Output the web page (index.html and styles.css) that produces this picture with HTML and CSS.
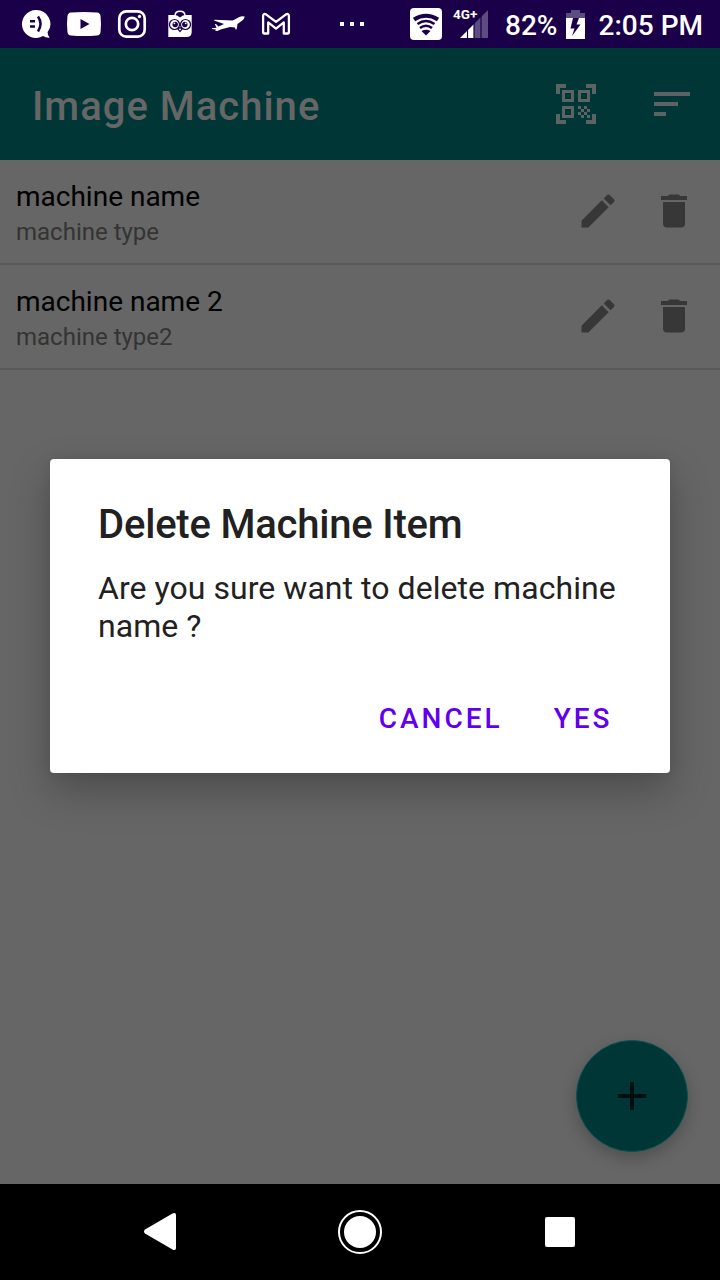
FILE: index.html
```html
<!DOCTYPE html>
<html lang="en">
<head>
<meta charset="utf-8">
<title>Image Machine</title>
<link rel="stylesheet" href="styles.css">
</head>
<body>
<div class="screen">
  <header class="status">
    <div class="notifications">
      <svg class="note" viewBox="0 0 36 36"><path fill="#fff" d="M18 4a14 14 0 1 0 7 26.100q3 2 6.600 1.700q-2-2.500-2-5.500A14 14 0 0 0 18 4z"/><path d="M12 15.200h5M12 20.500h5" stroke="#190048" stroke-width="2.400"/><path d="M20 10.500q5 7 0 15" fill="none" stroke="#190048" stroke-width="2.500"/></svg>
      <svg class="note" viewBox="0 0 36 36"><path fill="#fff" d="M5 6.600Q18 5.400 31 6.600q3.300.3 3.600 4Q35.400 18 34.600 25.400q-.4 3.700-3.600 4.100Q18 30.700 5 29.500q-3.300-.4-3.600-4.100Q.6 18 1.400 10.600q.4-3.700 3.600-4z"/><path fill="#190048" d="M14.500 13v10l9-5z"/></svg>
      <svg class="note" viewBox="0 0 36 36"><g fill="none" stroke="#fff" stroke-width="2.700"><rect x="5.300" y="5.300" width="25.400" height="25.400" rx="7"/><circle cx="18" cy="18" r="6.200"/></g><circle cx="25.500" cy="10.500" r="1.700" fill="#fff"/></svg>
      <svg class="note" viewBox="0 0 36 36"><path d="M13 10q0-4.700 5-4.700t5 4.700" fill="none" stroke="#fff" stroke-width="1.500"/><path fill="#fff" d="M6.300 9h5q4.200 0 6.700 2.400Q20.500 9 24.700 9h5v17q0 5-5 5H6.300z"/><g fill="#fff" stroke="#190048" stroke-width="1.200"><circle cx="12.500" cy="18.500" r="5"/><circle cx="23.500" cy="18.500" r="5"/><path d="m16 23 2-1.500 2 1.500-2 2.500z"/></g><g fill="#190048"><circle cx="13.200" cy="18.500" r="2.700"/><circle cx="22.800" cy="18.500" r="2.700"/></g><circle cx="12.400" cy="17.300" r=".9" fill="#fff"/><circle cx="23.700" cy="17.300" r=".9" fill="#fff"/></svg>
      <svg class="note" viewBox="0 0 36 36"><path fill="#fff" d="M34.700 10.600Q32 9.600 29.300 11l-6.500 3.400L4.500 13.700 4 14.400l10 3.700-5.500 2.300L6 18H4.800l1.700 3.700-4.600.6v.8l4 .3-.7 1.400 2.100.3 3.300-1.700L20 20.900l5 .6.500 2 1.200-.3.800-5.200 2.700-2q4-2 4.500-5.400z"/></svg>
      <svg class="note" viewBox="0 0 36 36"><path d="M6 27.200q-.9 0-.9-1V10q0-3.300 2.900-1.900l10 7.500 10-7.500q2.900-1.400 2.900 1.900v16.200q0 1-.9 1h-4.200V16.100L18 22.300l-7.800-6.200v11.100z" fill="none" stroke="#fff" stroke-width="2.300" stroke-linejoin="round" transform="translate(0 .3)"/></svg>
    </div>
    <svg class="more" viewBox="0 0 24 4"><path fill="#fff" d="M0 0h4v4H0zm10 0h4v4h-4zm10 0h4v4h-4z"/></svg>
    <svg class="wifi" viewBox="0 0 32 32"><rect width="32" height="32" rx="4" fill="#fff"/><g fill="none" stroke="#190048"><path d="M4 11.500q12-7.500 24 0" stroke-width="4"/><path d="M7.500 16q8.500-6 17 0M10 20q6-4.500 12 0" stroke-width="2.600"/></g><path fill="#190048" d="M11.500 23q4.500-2.500 9 0L16 27.500z"/></svg>
    <div class="network">
      <span class="network-type">4G+</span>
      <svg class="signal" viewBox="0 0 28 28"><path fill="#5d4c7f" d="M14 14 28 0v28H14z"/><path fill="#fff" d="m0 28 14-14v14z"/><path d="M7.500 18v10M14 10v18M21 5v23" stroke="#190048" stroke-width="1.200"/></svg>
    </div>
    <span class="battery-level">82%</span>
    <svg class="battery" viewBox="0 0 19 29"><path fill="#5d4c7f" d="M5 0h9v3h5v5H0V3h5z"/><path fill="#fff" d="M0 8h19v21H0z"/><path fill="#190048" d="M7 8 4.500 18.500H8.500L6 26l8.500-11.500h-4L13 8z"/></svg>
    <span class="clock">2:05 PM</span>
  </header>

  <div class="toolbar">
    <h1 class="app-title">Image Machine</h1>
    <svg class="scan" viewBox="0 0 40 40"><path d="M0 0h10v4H4v6H0zM30 0h10v10h-4V4h-6zM0 30h4v6h6v4H0zM36 30h4v10H30v-4h6z"/><path fill-rule="evenodd" d="M6 6h12v12H6zm3 3v6h6V9zM22 6h12v12H22zm3 3v6h6V9zM6 22h12v12H6zm3 3v6h6v-6z"/><path d="M22 22h3v3h-3zM28 22h3v3h-3zM25 25h3v3h-3zM31 25h3v3h-3zM22 28h3v3h-3zM28 28h3v3h-3zM25 31h3v3h-3zM31 31h3v3h-3z"/></svg>
    <svg class="sort" viewBox="0 0 36 24"><path d="M0 0h36v4H0zM0 10h24v4H0zM0 20h12v4H0z"/></svg>
  </div>

  <main class="content">
    <div class="row">
      <div class="labels"><div class="name">machine name</div><div class="type">machine type</div></div>
      <svg class="action edit" viewBox="0 0 24 24"><path d="M3 17.250V21h3.750L17.810 9.940l-3.750-3.750zM20.710 7.040a1 1 0 0 0 0-1.410l-2.340-2.340a1 1 0 0 0-1.410 0l-1.830 1.830 3.750 3.750z"/></svg>
      <svg class="action trash" viewBox="0 0 26 34"><path d="M2 8h22v21.500q0 4-4 4H6q-4 0-4-4zM0 2h6.500l2-1.500h9l2 1.500H26v4H0z"/></svg>
    </div>
    <div class="row">
      <div class="labels"><div class="name">machine name 2</div><div class="type">machine type2</div></div>
      <svg class="action edit" viewBox="0 0 24 24"><path d="M3 17.250V21h3.750L17.810 9.940l-3.750-3.750zM20.710 7.040a1 1 0 0 0 0-1.410l-2.340-2.340a1 1 0 0 0-1.410 0l-1.830 1.830 3.750 3.750z"/></svg>
      <svg class="action trash" viewBox="0 0 26 34"><path d="M2 8h22v21.500q0 4-4 4H6q-4 0-4-4zM0 2h6.500l2-1.500h9l2 1.500H26v4H0z"/></svg>
    </div>
  </main>

  <nav class="navigation">
    <svg viewBox="0 0 44 44"><path fill="#fff" d="M7 19.500 34.500 3.500Q38 2 38 5v33q0 3-3.500 1.500L7 23.500q-2-2 0-4z"/></svg>
    <svg viewBox="0 0 44 44"><circle cx="22" cy="22" r="21" fill="none" stroke="#fff" stroke-width="2"/><circle cx="22" cy="22" r="16" fill="#fff"/></svg>
    <svg viewBox="0 0 44 44"><rect x="7" y="7" width="30" height="30" rx="2" fill="#fff"/></svg>
  </nav>

  <div class="fab"><svg viewBox="0 0 28 28"><path fill="#000f0e" d="M12 0h4v12h12v4H16v12h-4V16H0v-4h12z"/></svg></div>

  <section class="dialog">
    <h2 class="dialog-title">Delete Machine Item</h2>
    <p class="message">Are you sure want to delete machine name ?</p>
    <div class="buttons"><span>CANCEL</span><span>YES</span></div>
  </section>
</div>
</body>
</html>
```
FILE: styles.css
```css
* { box-sizing: border-box; }
body { margin: 0; font-family: Roboto, "Noto Sans", sans-serif; }
svg { display: block; flex: none; }
.screen { position: relative; display: flex; flex-direction: column; width: 720px; height: 1280px; overflow: hidden; background: #666; }
.status { display: flex; align-items: center; height: 48px; padding: 0 17px 0 18px; background: #190048; color: #fff; font-size: 28px; font-weight: 500; line-height: 48px; white-space: nowrap; }
.notifications { display: flex; gap: 12px; }
.note { width: 36px; height: 36px; }
.more { width: 24px; height: 4px; margin-left: 46px; }
.wifi { width: 32px; height: 32px; margin-left: 46px; }
.network { position: relative; width: 36px; height: 28px; margin-left: 11px; }
.network-type { position: absolute; left: 0; top: -4px; font-size: 13.500px; line-height: 16px; font-weight: 700; }
.signal { width: 28px; height: 28px; margin-left: 7px; }
.battery-level { width: 61px; padding: 3px 0 0 0; margin-left: 16px; }
.battery { width: 19px; height: 29px; }
.clock { margin-left: auto; padding-top: 3px; }
.toolbar { display: flex; align-items: center; height: 112px; padding: 0 30px 0 32px; background: #003736; fill: #5c6463; }
.app-title { flex: 1; margin: 6px 0 0; font-size: 40px; line-height: 48px; font-weight: 500; letter-spacing: 1px; color: #666; }
.scan { width: 40px; height: 40px; margin-right: 58px; }
.sort { width: 36px; height: 24px; }
.content { flex: 1; }
.row { display: flex; align-items: flex-start; height: 105px; padding: 0 33px 0 16px; border-bottom: 2px solid #595959; }
.labels { flex: 1; padding-top: 19px; }
.name { font-size: 28px; line-height: 36px; color: #000; }
.type { font-size: 24px; line-height: 34px; color: #343434; }
.action { fill: #373737; }
.edit { width: 44px; height: 44px; margin: 29px 41px 0 0; }
.trash { width: 26px; height: 34px; margin: 34px 0 0; }
.navigation { display: flex; justify-content: space-between; align-items: center; height: 96px; padding: 0 138px; background: #000; }
.navigation svg { width: 44px; height: 44px; }
.fab { position: absolute; left: 576px; top: 1040px; width: 112px; height: 112px; display: grid; place-items: center; border: 1px solid #08524e; border-radius: 50%; background: #003736; box-shadow: 0 6px 16px rgba(0,0,0,.24); }
.fab svg { width: 28px; height: 28px; }
.dialog { position: absolute; left: 50px; top: 459px; width: 620px; height: 314px; padding: 41px 48px 0; border-radius: 4px; background: #fff; color: #212121; box-shadow: 0 18px 40px rgba(0,0,0,.25), 0 0 12px rgba(0,0,0,.08); }
.dialog-title { margin: 0; font-size: 40px; line-height: 50px; font-weight: 500; letter-spacing: -.2px; }
.message { margin: 19px 0 0; font-size: 32px; line-height: 38px; letter-spacing: .05px; }
.buttons { display: flex; justify-content: flex-end; gap: 51px; margin: 57px 9.500px 0 0; font-size: 28px; line-height: 34px; font-weight: 500; letter-spacing: 3px; color: #6200ee; }
```
